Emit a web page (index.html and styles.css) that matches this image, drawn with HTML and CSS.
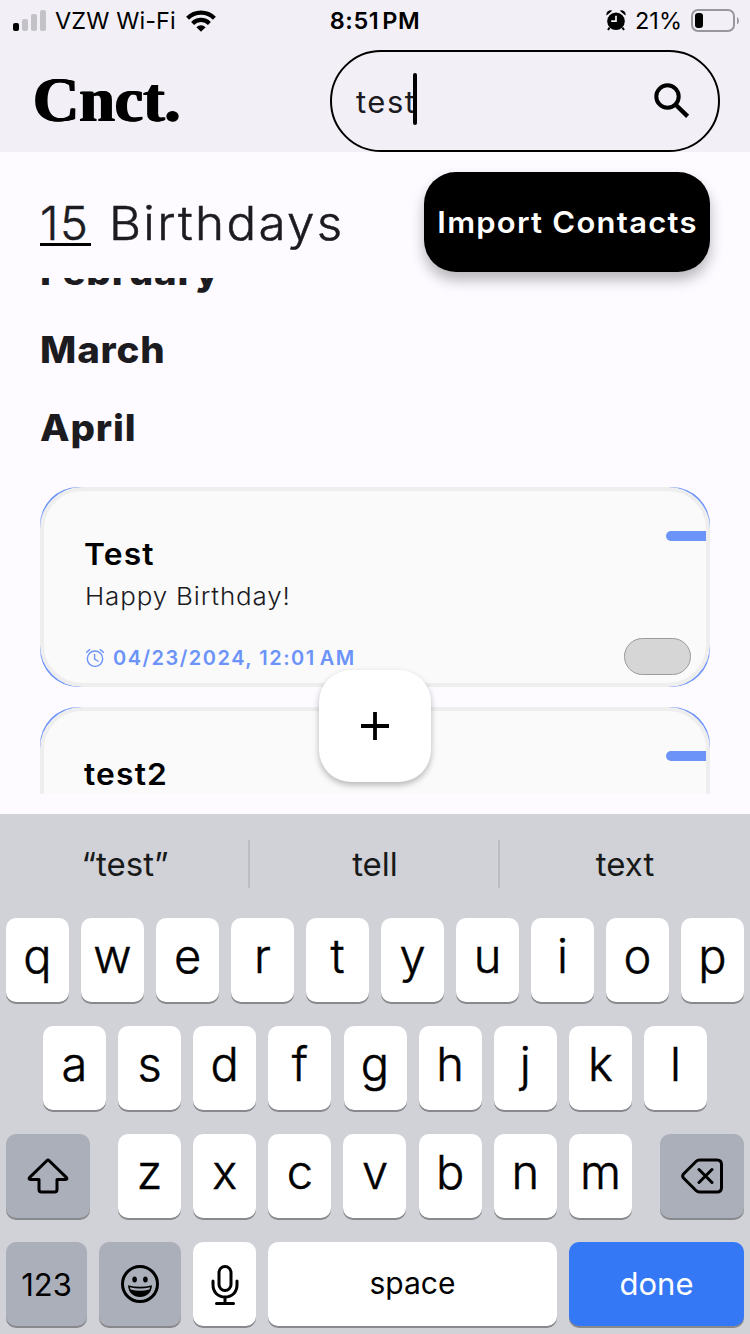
FILE: index.html
```html
<!DOCTYPE html>
<html lang="en">
<head>
<meta charset="utf-8">
<title>Cnct.</title>
<link rel="stylesheet" href="styles.css">
</head>
<body>
<div class="screen">
  <header class="top">
    <div class="status">
      <div class="status-left">
        <svg class="signal" width="34" height="22" viewBox="0 0 34 22"><rect x="0" y="13" width="6" height="8" rx="2"/><g fill="#c3c2c7"><rect x="9" y="9" width="6" height="12" rx="2"/><rect x="18" y="4" width="6" height="17" rx="2"/><rect x="27" y="0" width="6" height="21" rx="2"/></g></svg>
        <span class="carrier">VZW Wi-Fi</span>
        <svg class="wifi" width="30" height="22" viewBox="0 0 30 22"><g fill="none" stroke="#000" stroke-width="4.2"><path d="M1.6 8.2a19 19 0 0 1 26.8 0"/><path d="M6.6 13.4a12 12 0 0 1 16.8 0"/></g><path d="M15 21.8l-4.6-4.6a6.6 6.6 0 0 1 9.2 0z"/></svg>
      </div>
      <span class="time">8:51<span class="pm">PM</span></span>
      <div class="status-right">
        <svg class="alarm" width="20" height="22" viewBox="0 0 20 22"><circle cx="10" cy="11.2" r="8.8"/><path d="M.6 5.400A4 4 0 0 1 6.300.700zM19.400 5.400A4 4 0 0 0 13.700.700z"/><path d="M3.6 17.6L2 20M16.4 17.6L18 20" stroke="#000" stroke-width="2"/><path d="M10 5.8v5.4H5.2" fill="none" stroke="#f2f0f6" stroke-width="1.7"/></svg>
        <span class="percent">21%</span>
        <svg class="battery" width="48" height="24" viewBox="0 0 48 24"><rect x="1" y="1" width="42" height="21" rx="6" fill="none" stroke="#98979b" stroke-width="2"/><path d="M46 8v7.500c2.600-1.500 2.600-6 0-7.500z" fill="#98979b"/><rect x="4" y="4" width="8" height="15" rx="3"/></svg>
      </div>
    </div>
    <div class="brandbar">
      <div class="logo">Cnct.</div>
      <div class="search">
        <span class="query">test</span><span class="caret"></span>
        <svg class="search-icon" width="36" height="36" viewBox="0 0 36 36" fill="none" stroke="#000"><circle cx="13.500" cy="13.500" r="11.200" stroke-width="4"/><path d="M22 22l11.600 11.400" stroke-width="4.400"/></svg>
      </div>
    </div>
  </header>

  <section class="summary">
    <h1 class="heading"><span class="count">15</span> <span class="label">Birthdays</span></h1>
    <button class="import"><span class="import-label">Import Contacts</span></button>
  </section>

  <main class="list">
    <div class="months">
      <h2 class="month">February</h2>
      <h2 class="month">March</h2>
      <h2 class="month">April</h2>
    </div>
    <div class="cards">
      <article class="card"><div class="card-inner">
        <div class="info">
          <h3 class="name">Test</h3>
          <p class="message">Happy Birthday!</p>
          <p class="date"><svg width="20" height="20" viewBox="0 0 20 20" fill="none" stroke="#6b93f8" stroke-width="1.400"><circle cx="10" cy="10.700" r="7.700"/><path d="M9.600 6v5.200l4 2.300M1.200 4.600l4-3.400M18.800 4.600l-4-3.400"/></svg><span class="stamp">04/23/2024, 12:01<span class="am">AM</span></span></p>
        </div>
        <div class="side"><span class="tag"></span><span class="toggle"></span></div>
      </div></article>
      <article class="card"><div class="card-inner">
        <div class="info"><h3 class="name">test2</h3></div>
        <div class="side"><span class="tag"></span></div>
      </div></article>
    </div>
  </main>
  <button class="fab" aria-label="Add"><svg width="28" height="28" viewBox="0 0 28 28"><path d="M14 0v28M0 14h28" stroke="#000" stroke-width="3.800"/></svg></button>

  <section class="keyboard">
    <div class="suggestions"><span>“test”</span><span>tell</span><span>text</span></div>
    <div class="rows">
      <div class="row"><span class="key">q</span><span class="key">w</span><span class="key">e</span><span class="key">r</span><span class="key">t</span><span class="key">y</span><span class="key">u</span><span class="key">i</span><span class="key">o</span><span class="key">p</span></div>
      <div class="row middle"><span class="key">a</span><span class="key">s</span><span class="key">d</span><span class="key">f</span><span class="key">g</span><span class="key">h</span><span class="key">j</span><span class="key">k</span><span class="key">l</span></div>
      <div class="row">
        <span class="key dark wide"><svg width="42" height="36" viewBox="0 0 42 36" fill="none" stroke="#000" stroke-width="3" stroke-linejoin="round"><path d="M19.800 2.700Q21 1.500 22.200 2.700L39.300 19.400Q40.800 21.500 38.500 21.500H30V31.500Q30 34 27.500 34H14.500Q12 34 12 31.500V21.500H3.500Q1.200 21.500 2.700 19.400Z"/></svg></span>
        <div class="letters"><span class="key">z</span><span class="key">x</span><span class="key">c</span><span class="key">v</span><span class="key">b</span><span class="key">n</span><span class="key">m</span></div>
        <span class="key dark wide"><svg width="42" height="36" viewBox="0 0 42 36" fill="none" stroke="#000" stroke-width="3" stroke-linecap="round" stroke-linejoin="round"><path d="M18.500 2H36Q40.500 2 40.500 6.500V29.500Q40.500 34 36 34H18.500Q16.500 34 15 32.500L2.500 20Q.8 18 2.500 16L15 3.500Q16.500 2 18.500 2ZM18 11.500L31 24.500M31 11.500L18 24.500"/></svg></span>
      </div>
      <div class="row bottom">
        <span class="key dark numbers">123</span>
        <span class="key dark emoji"><svg width="40" height="40" viewBox="0 0 40 40"><circle cx="20" cy="20" r="17.500" fill="none" stroke="#000" stroke-width="3"/><ellipse cx="14.600" cy="15.500" rx="2.300" ry="3"/><ellipse cx="25.400" cy="15.500" rx="2.300" ry="3"/><path d="M8 21.200Q20 24.500 32 21.200C31.500 29 26.500 33 20 33S8.500 29 8 21.200Z"/><path d="M9.800 23.200Q20 26 30.200 23.200L29.400 25.400Q20 28 10.600 25.400Z" fill="#abafba"/></svg></span>
        <span class="key"><svg class="mic" width="28" height="42" viewBox="0 0 28 42" fill="none" stroke="#000" stroke-width="3" stroke-linecap="round"><rect x="8" y="2.500" width="12" height="24" rx="6"/><path d="M2 17v3.500c0 8 5 12.500 12 12.500s12-4.500 12-12.500V17M14 33v6.500M5.500 39.500h17"/></svg></span>
        <span class="key space">space</span>
        <span class="key done">done</span>
      </div>
    </div>
  </section>
</div>
</body>
</html>
```
FILE: styles.css
```css
* { box-sizing: border-box; margin: 0; padding: 0; }
body { width: 750px; height: 1334px; overflow: hidden; font-family: Inter, "Liberation Sans", sans-serif; color: #1c1b1f; background: #fdfbff; }
svg { display: block; flex: none; }
button { border: 0; font-family: inherit; }
.screen { position: relative; display: flex; flex-direction: column; width: 750px; height: 1334px; }

.top { height: 152px; background: #f2f0f6; }
.status { display: grid; grid-template-columns: 1fr auto 1fr; height: 40px; padding: 0 11px 0 13px; color: #000; font-size: 23.5px; line-height: 41px; white-space: nowrap; }
.status-left, .status-right { display: flex; align-items: center; }
.status-right { justify-content: flex-end; }
.carrier { width: 122px; margin: 0 9px 0 8px; letter-spacing: .1px; }
.time { margin-left: -2px; font-weight: 600; letter-spacing: .6px; }
.pm { margin-left: 3px; }
.percent { width: 46px; margin: 0 10px 0 9px; }

.brandbar { display: flex; justify-content: space-between; height: 112px; padding: 10px 30px 0 33px; }
.logo { color: #000; font: bold 64px/100px "Liberation Serif", serif; text-shadow: 1px 0 #000, -1px 0 #000; }
.search { display: flex; align-items: center; width: 390px; height: 102px; padding: 0 28px 0 24px; border: 2px solid #000; border-radius: 51px; }
.query { font-size: 31px; font-weight: 400; letter-spacing: 1.5px; }
.caret { width: 4px; height: 52px; margin: -4px auto 0 -3px; border-radius: 2px; background: #000; }

.summary { display: flex; justify-content: space-between; height: 126px; padding: 20px 40px 0; }
.heading { display: flex; gap: 18px; font-size: 47px; font-weight: 300; line-height: 101px; white-space: nowrap; -webkit-text-stroke: .5px; }
.count { width: 51px; height: 74px; border-bottom: 3px solid #000; letter-spacing: 1.5px; }
.label { letter-spacing: 2.2px; transform: scaleX(1.05); transform-origin: left; }
.import { width: 286px; height: 100px; border-radius: 32px; background: #000; color: #fff; font-size: 29.5px; font-weight: 600; white-space: nowrap; box-shadow: 0 8px 14px rgba(0, 0, 0, .28); }
.import-label { display: block; margin-left: 1px; letter-spacing: 1.2px; transform: scaleX(1.05); }

.list { height: 516px; padding: 0 40px; overflow: hidden; }
.months { margin-top: -45px; }
.month { height: 78px; font-size: 37px; font-weight: 800; line-height: 78px; letter-spacing: .8px; transform: scaleX(1.04); transform-origin: left; }
.cards { display: grid; gap: 20px; margin-top: 20px; }
.card { height: 200px; border-radius: 38px; background: #6b93f8; }
.card-inner { display: flex; justify-content: space-between; height: 200px; padding-left: 41px; border: 4px solid #eee; border-radius: 42px; background: #fafafa; }
.name { margin: 42px 0 0 -1px; color: #000; font-size: 30px; font-weight: 600; line-height: 42px; letter-spacing: 1.1px; transform: scaleX(1.06); transform-origin: left; }
.message { font-size: 24.5px; font-weight: 300; line-height: 42px; letter-spacing: .8px; transform: scaleX(1.06); transform-origin: left; }
.date { display: flex; align-items: center; gap: 8px; height: 30px; margin-top: 26px; color: #6b93f8; font-size: 20px; font-weight: 600; letter-spacing: 1.5px; }
.am { margin-left: 4px; }
.side { display: flex; flex-direction: column; align-items: flex-end; }
.tag { width: 40px; height: 10px; margin-top: 40px; border-radius: 5px 0 0 5px; background: #6b93f8; }
.toggle { width: 67px; height: 37px; margin: 97px 15px 0 0; border: 1px solid #9b9b9b; border-radius: 19px; background: #d6d6d6; }
.fab { position: absolute; left: 319px; top: 670px; display: grid; place-items: center; width: 112px; height: 112px; border-radius: 32px; background: #fff; box-shadow: 0 3px 6px rgba(0, 0, 0, .28); }

.keyboard { height: 520px; margin-top: 20px; background: #d1d2d8; color: #000; }
.suggestions { display: grid; grid-template-columns: repeat(3, 250px); height: 104px; padding-top: 26px; color: #181a1a; font-size: 33px; line-height: 48px; text-align: center; }
.suggestions span { height: 48px; padding-left: 2px; border-right: 2px solid #bcbdc2; }
.suggestions span:last-child { padding: 0; border: 0; }
.rows { display: grid; gap: 24px; padding: 0 6px; }
.row { display: flex; justify-content: space-between; }
.middle { padding: 0 37px; }
.letters { display: flex; justify-content: space-between; width: 514px; }
.key { display: flex; align-items: center; justify-content: center; width: 63px; height: 84px; padding-bottom: 9px; border-radius: 10px; background: #fff; box-shadow: 0 2px 0 #88898d; font-size: 47px; font-weight: 300; -webkit-text-stroke: .5px; }
.dark { background: #abafba; }
.wide { width: 84px; padding: 0; }
.numbers, .space, .done { font-weight: 400; -webkit-text-stroke: 0; }
.numbers { width: 81px; padding: 0; font-size: 31px; }
.emoji { width: 82px; padding: 0; }
.mic { margin-top: 10px; }
.space { width: 289px; padding: 0 0 2px; font-size: 30px; }
.done { width: 175px; padding: 0 0 2px; background: #3478f6; color: #fff; font-size: 31px; }
```
